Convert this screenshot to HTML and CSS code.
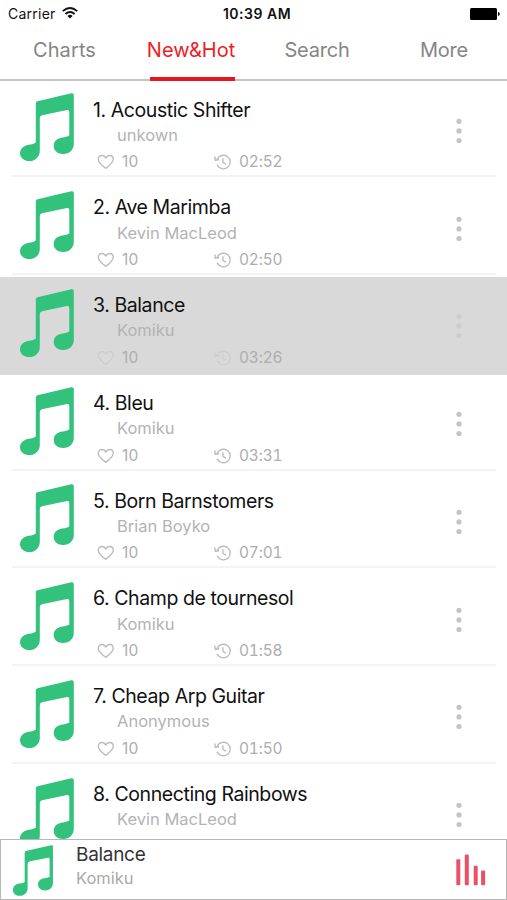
FILE: index.html
```html
<!DOCTYPE html>
<html lang="en">
<head>
<meta charset="utf-8">
<title>Music</title>
<link rel="stylesheet" href="styles.css">
</head>
<body>
<svg class="defs" aria-hidden="true">
  <symbol id="note" viewBox="0 0 54 68.5"><path fill="#32c27c" d="M15.8 10.5Q15.8 8.6 17.5 8.2L51.3.3Q53.8-.1 53.8 2V51C53.8 57 49 61 43.300 61C37.500 61 33.700 57.500 33.700 53C33.700 47.500 38.500 44.300 44.500 44.200Q47.500 44 49.300 42.600V19.200Q49.300 16.600 47 17L22 22.300Q19.800 22.800 19.800 25V58C19.800 64 15 68.200 9.500 68.200C4 68.200 0 64.700 0 60.300C0 55 5 51.600 11 51.400Q14 51.200 15.800 49.600Z"/></symbol>
  <symbol id="heart" viewBox="0 0 18 16"><path fill="none" stroke="currentColor" stroke-width="1.400" stroke-linejoin="round" d="M9 14.500C5.500 11.800 1.300 8.800 1.300 5.100C1.300 2.900 3 1.300 5 1.300C6.800 1.300 8.200 2.300 9 4C9.800 2.300 11.200 1.300 13 1.300C15 1.300 16.700 2.900 16.700 5.100C16.700 8.800 12.500 11.800 9 14.500Z"/></symbol>
  <symbol id="history" viewBox="0 0 18 16"><g fill="none" stroke="currentColor" stroke-width="1.400" stroke-linecap="round" stroke-linejoin="round"><path d="M3.200 5.300A7 7 0 1 1 3.400 11.200M.9 2.700L1.300 6.300L4.800 5.700M9.200 4.600V8.500L11.900 10"/></g></symbol>
  <symbol id="dots" viewBox="0 0 6 26"><circle cx="3" cy="3.300" r="2.600"/><circle cx="3" cy="12.900" r="2.600"/><circle cx="3" cy="22.500" r="2.600"/></symbol>
</svg>
<div class="app">
  <header class="status">
    <div class="carrier"><span>Carrier</span><svg class="wifi" viewBox="0 0 16 12"><g fill="none" stroke="#111" stroke-width="1.800"><path d="M.8 4.200Q8-2.200 15.200 4.200M3.400 7Q8 3 12.600 7"/></g><path fill="#111" d="M5.400 8.900Q8 6.800 10.600 8.900L8 11.600Z"/></svg></div>
    <div class="clock">10:39 AM</div>
    <svg class="battery" viewBox="0 0 30 12"><rect width="27" height="12" rx="1.500"/><path d="M28 4Q29.800 4.300 29.800 6T28 8Z"/></svg>
  </header>
  <nav class="tabs">
    <a class="tab charts">Charts</a>
    <a class="tab hot active"><span>New&amp;Hot</span></a>
    <a class="tab search">Search</a>
    <a class="tab more">More</a>
  </nav>
  <main class="list" id="list"></main>
  <footer class="player">
    <svg class="cover"><use href="#note"/></svg>
    <div class="playing"><div class="now">Balance</div><div class="by">Komiku</div></div>
    <svg class="bars" viewBox="0 0 30 32"><rect x=".3" y="5.200" width="4" height="26" rx="1"/><rect x="8.800" y=".5" width="4" height="30.700" rx="1"/><rect x="17.700" y="11.700" width="4" height="19.500" rx="1"/><rect x="25.100" y="16.500" width="4" height="14.700" rx="1"/></svg>
  </footer>
</div>
<script src="script.js"></script>
</body>
</html>
```
FILE: styles.css
```css
* { box-sizing: border-box; }
body { margin: 0; background: #fff; font-family: Inter, "Liberation Sans", sans-serif; }
.defs { position: absolute; width: 0; height: 0; }
.app { width: 507px; height: 900px; display: flex; flex-direction: column; overflow: hidden; }
.status { height: 27px; flex: none; display: grid; grid-template-columns: 1fr auto 1fr; align-items: center; padding: 0 7px 0 8px; font-size: 14px; line-height: 27px; color: #111; }
.carrier { display: flex; align-items: center; gap: 6px; letter-spacing: 0.25px; }
.wifi { width: 16px; height: 12px; margin-top: -2px; }
.clock { font-weight: 600; font-size: 14px; letter-spacing: 0.5px; padding-left: 6px; }
.battery { width: 30px; height: 12px; justify-self: end; }
.tabs { height: 54.400px; flex: none; display: grid; grid-template-columns: 129px 124px 128px 126px; border-bottom: 2px solid #c4c4c4; }
.tab { text-align: center; font-size: 20px; line-height: 47px; color: #858585; letter-spacing: 0.1px; }
.search { letter-spacing: -0.2px; }
.more { letter-spacing: -0.2px; }
.hot { justify-self: center; width: 100px; }
.active { position: relative; color: #ee1c25; white-space: nowrap; letter-spacing: 0; }
.active::after { content: ""; position: absolute; left: 9px; width: 85px; top: 49.500px; height: 4px; background: #e6151f; }
.list { flex: 1; min-height: 0; overflow: hidden; }
.row { height: 97.750px; display: flex; align-items: flex-start; padding: 12px 45px 0 20px; background: linear-gradient(#f3f3f3, #f3f3f3) 12px 94px / 484px 2px no-repeat; }
.row .art { width: 54px; height: 68.500px; flex: none; }
.info { flex: 1; padding-left: 19px; }
.title { font-size: 19.500px; line-height: 24px; margin-top: 4.200px; color: #111; white-space: nowrap; letter-spacing: -0.42px; }
.artist { font-size: 16.500px; line-height: 22px; margin: 2.400px 0 0 24px; color: #b3b3b3; white-space: nowrap; }
.meta { display: grid; grid-template-columns: 117px auto; margin: 5.500px 0 0 4px; }
.meta div { display: flex; align-items: center; font-size: 15.500px; line-height: 22px; height: 22px; color: #adadad; gap: 7.500px; }
.meta span { letter-spacing: 0.1px; }
.meta .time { font-variant-numeric: tabular-nums; letter-spacing: -0.2px; }
.meta svg { width: 17.500px; height: 16px; color: #bcbcbc; }
.menu { width: 6px; height: 26px; margin-top: 24.500px; fill: #c4c4c4; flex: none; }
.row.selected { background: #d9d9d9; }
.selected .meta svg { color: #cdcdcd; }
.selected .menu { fill: #cdcdcd; }
.player { height: 61.500px; flex: none; display: flex; align-items: flex-start; background: #fff; border: 1.500px solid #b7b7b7; padding: 5px 20px 0 11px; }
.cover { width: 42px; height: 51px; flex: none; }
.playing { flex: 1; padding-left: 22px; }
.now { font-size: 19px; line-height: 24px; margin-top: -2px; color: #333; letter-spacing: -0.3px; }
.by { font-size: 16.500px; line-height: 22px; color: #aaa; }
.bars { width: 30px; height: 32px; margin-top: 9px; fill: #ec5068; }
```
FILE: script.js
```js
const tracks = [
  ["Acoustic Shifter", "unkown", "02:52"],
  ["Ave Marimba", "Kevin MacLeod", "02:50"],
  ["Balance", "Komiku", "03:26"],
  ["Bleu", "Komiku", "03:31"],
  ["Born Barnstomers", "Brian Boyko", "07:01"],
  ["Champ de tournesol", "Komiku", "01:58"],
  ["Cheap Arp Guitar", "Anonymous", "01:50"],
  ["Connecting Rainbows", "Kevin MacLeod", ""]
];
const meta = time => `
      <div class="meta">
        <div><svg><use href="#heart"/></svg><span>10</span></div>
        <div><svg><use href="#history"/></svg><span class="time">${time}</span></div>
      </div>`;
document.getElementById("list").innerHTML = tracks.map(([title, artist, time], i) => `
  <article class="row${i === 2 ? " selected" : ""}">
    <svg class="art"><use href="#note"/></svg>
    <div class="info">
      <div class="title">${i + 1}. ${title}</div>
      <div class="artist">${artist}</div>
      ${time ? meta(time) : ""}
    </div>
    <svg class="menu"><use href="#dots"/></svg>
  </article>`).join("");
```
